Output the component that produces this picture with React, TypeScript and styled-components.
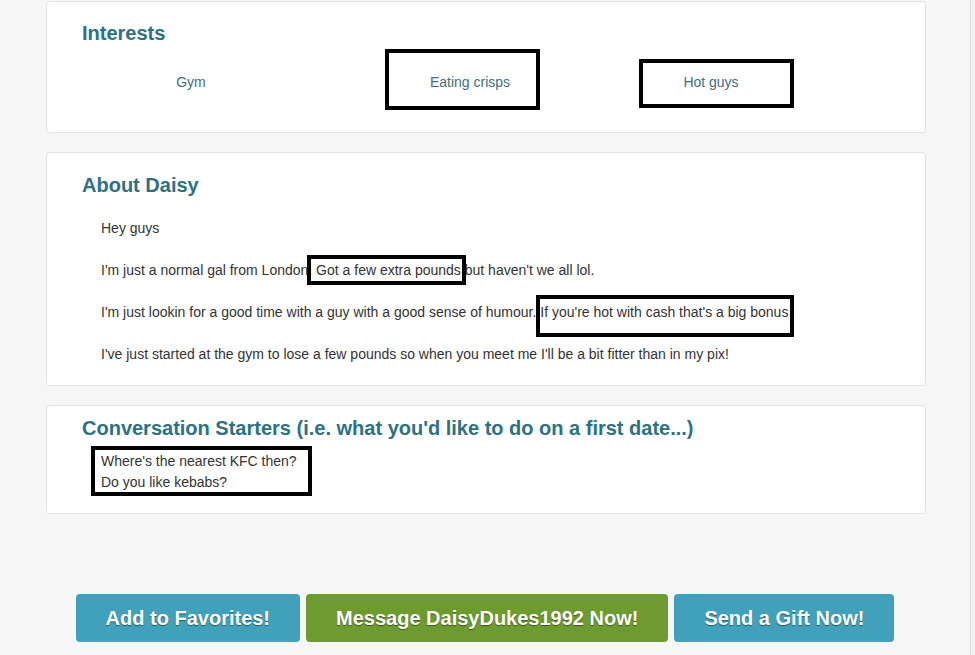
import React from 'react'
import styled, { createGlobalStyle } from 'styled-components'

const GlobalStyle = createGlobalStyle`
  html, body {
    margin: 0;
    padding: 0;
    background: #f6f6f6;
    font-family: 'Liberation Sans', Arial, sans-serif;
    color: #333;
  }
`

const Shell = styled.div`
  display: flex;
  width: 975px;
  height: 655px;
  overflow: hidden;
`

const Main = styled.main`
  flex: 1;
  padding: 1px 0 0 46px;
`

const Rail = styled.div`
  width: 4px;
  border-left: 1px solid #dedede;
  background: #f2f2f2;
`

const Card = styled.section<{ $top: number; $bottom: number }>`
  width: 880px;
  box-sizing: border-box;
  background: #fff;
  border: 1px solid #e2e2e2;
  border-radius: 4px;
  padding: ${({ $top }) => $top}px 35px ${({ $bottom }) => $bottom}px;
  margin-bottom: 19px;
`

const Heading = styled.h2`
  margin: 0;
  font-size: 20px;
  line-height: 22px;
  font-weight: bold;
  color: #2c7283;
`

const InterestRow = styled.div`
  display: grid;
  grid-template-columns: 218px 340px 142px;
  margin-top: 28px;
`

const Interest = styled.div`
  text-align: center;
  font-size: 14px;
  line-height: 20px;
  color: #3f707b;
`

// black annotation boxes drawn over the screenshot
const Mark = styled.span<{ $t: number; $r: number; $b: number; $l: number }>`
  position: relative;
  display: inline-block;

  &::after {
    content: '';
    position: absolute;
    top: ${({ $t }) => $t}px;
    right: ${({ $r }) => $r}px;
    bottom: ${({ $b }) => $b}px;
    left: ${({ $l }) => $l}px;
    border: 4px solid #000;
    pointer-events: none;
  }
`

const About = styled.div`
  padding-left: 19px;
  margin-top: 22px;
`

const Para = styled.p`
  margin: 0 0 22px;
  font-size: 14px;
  line-height: 20px;
  color: #333;

  &:last-child {
    margin-bottom: 0;
  }
`

const Starters = styled.div`
  margin: 12px 0 0 19px;
  font-size: 14px;
  line-height: 21px;
  color: #333;
`

const Actions = styled.div`
  display: flex;
  justify-content: center;
  gap: 6px;
  margin: 80px 0 0 -46px;
`

const ActionButton = styled.button<{ $tone: 'blue' | 'green' }>`
  height: 48px;
  padding: 0 30px;
  border: none;
  border-radius: 4px;
  background: ${({ $tone }) => ($tone === 'green' ? '#6e9b2f' : '#41a0ba')};
  color: #fff;
  font-family: 'Liberation Sans', Arial, sans-serif;
  font-size: 20px;
  font-weight: bold;
  text-shadow: 0 1px 1px rgba(0, 0, 0, 0.45);
  cursor: pointer;
`

const App = () => {
  return (
    <>
      <GlobalStyle />
      <Shell>
        <Main>
          <Card $top={20} $bottom={40}>
            <Heading>Interests</Heading>
            <InterestRow>
              <Interest>Gym</Interest>
              <Interest>
                <Mark $t={-23} $r={-30} $b={-18} $l={-45}>
                  Eating crisps
                </Mark>
              </Interest>
              <Interest>
                <Mark $t={-13} $r={-55} $b={-16} $l={-44}>
                  Hot guys
                </Mark>
              </Interest>
            </InterestRow>
          </Card>

          <Card $top={21} $bottom={21}>
            <Heading>About Daisy</Heading>
            <About>
              <Para>Hey guys</Para>
              <Para>
                I'm just a normal gal from London.{' '}
                <Mark $t={-5} $r={-5} $b={-5} $l={-9}>
                  Got a few extra pounds
                </Mark>{' '}
                but haven't we all lol.
              </Para>
              <Para>
                I'm just lookin for a good time with a guy with a good sense of humour.{' '}
                <Mark $t={-7} $r={-6} $b={-15} $l={-4}>
                  If you're hot with cash that's a big bonus
                </Mark>
                .
              </Para>
              <Para>
                I've just started at the gym to lose a few pounds so when you meet me I'll be a
                bit fitter than in my pix!
              </Para>
            </About>
          </Card>

          <Card $top={11} $bottom={20}>
            <Heading>Conversation Starters (i.e. what you'd like to do on a first date...)</Heading>
            <Starters>
              <Mark $t={-5} $r={-15} $b={-3} $l={-10}>
                Where's the nearest KFC then?
                <br />
                Do you like kebabs?
              </Mark>
            </Starters>
          </Card>

          <Actions>
            <ActionButton $tone="blue">Add to Favorites!</ActionButton>
            <ActionButton $tone="green">Message DaisyDukes1992 Now!</ActionButton>
            <ActionButton $tone="blue">Send a Gift Now!</ActionButton>
          </Actions>
        </Main>
        <Rail />
      </Shell>
    </>
  )
}

export default App
